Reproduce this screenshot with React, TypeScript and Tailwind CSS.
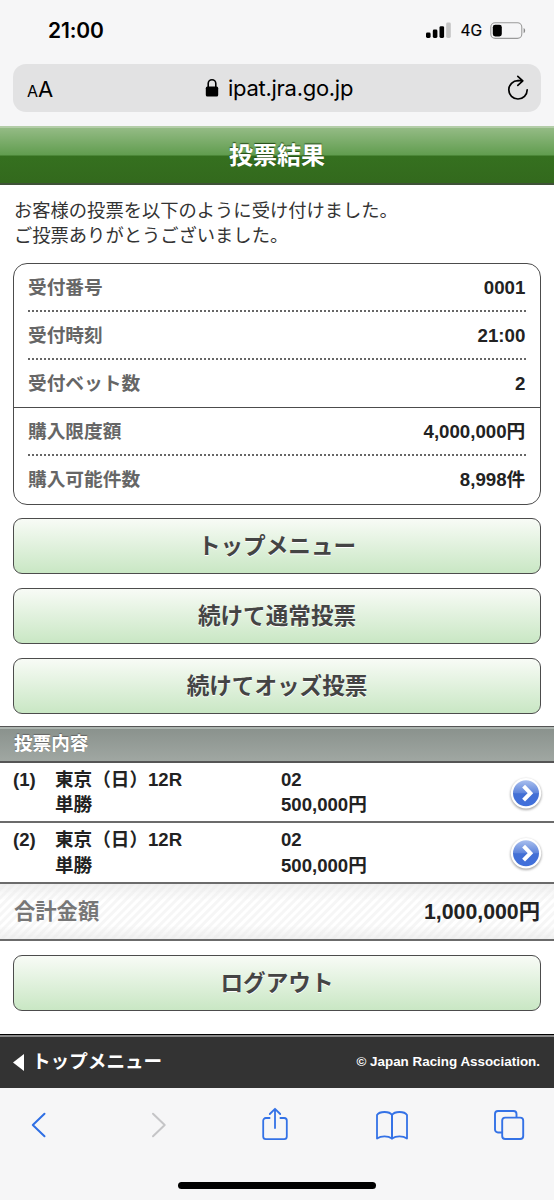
import React from 'react';

interface ReceiptRow {
  label: string;
  value: string;
  divider: 'dotted' | 'solid' | 'none';
}

interface Bet {
  no: number;
  race: string;
  type: string;
  horse: string;
  amount: string;
}

const receiptRows: ReceiptRow[] = [
  { label: '受付番号', value: '0001', divider: 'dotted' },
  { label: '受付時刻', value: '21:00', divider: 'dotted' },
  { label: '受付ベット数', value: '2', divider: 'solid' },
  { label: '購入限度額', value: '4,000,000円', divider: 'dotted' },
  { label: '購入可能件数', value: '8,998件', divider: 'none' },
];

const bets: Bet[] = [
  { no: 1, race: '東京（日）12R', type: '単勝', horse: '02', amount: '500,000円' },
  { no: 2, race: '東京（日）12R', type: '単勝', horse: '02', amount: '500,000円' },
];

const StatusBar: React.FC = () => (
  <div className="flex h-16 items-center justify-between pl-12 pr-[28px] pb-[3px] font-[Inter,sans-serif]">
    <span className="text-[21px] font-semibold leading-none tracking-[-0.1px] text-black">21:00</span>
    <div className="flex items-center">
      <svg className="mr-[8px]" width="26" height="17" viewBox="0 0 26 17">
        <rect x="0" y="10.5" width="4.6" height="5.5" rx="1.4" />
        <rect x="6.8" y="7.5" width="4.6" height="8.5" rx="1.4" />
        <rect x="13.5" y="4.2" width="4.6" height="11.8" rx="1.4" />
        <rect x="20.2" y="0.5" width="4.6" height="15.5" rx="1.4" fill="#c4c4c4" />
      </svg>
      <span className="text-[15.5px] leading-none text-black [-webkit-text-stroke:0.2px_#000]">4G</span>
      <svg className="ml-[8px]" width="36" height="18" viewBox="0 0 36 18">
        <rect x="0.8" y="0.8" width="31" height="15.6" rx="4.4" fill="none" stroke="#9a9a9a" strokeWidth="1.1" />
        <rect x="2.8" y="2.8" width="9" height="11.6" rx="2.4" />
        <path d="M33.6 6c2 .9 2 4.3 0 5.2z" fill="#8a8a8a" />
      </svg>
    </div>
  </div>
);

const AddressBar: React.FC = () => (
  <div className="mx-[13px] flex h-12 items-center rounded-[13px] bg-[#e2e2e3] pl-[14px] pr-[11px] font-[Inter,sans-serif] text-black">
    <div className="flex w-[178px] items-baseline pt-px leading-none">
      <span className="text-[16px]">A</span>
      <span className="text-[22px]">A</span>
    </div>
    <div className="flex grow items-center">
      <svg className="mr-[9px]" width="14" height="20" viewBox="0 0 14 20">
        <rect x="0.8" y="8.6" width="12.4" height="10" rx="1.6" />
        <path d="M3.2 9V5.5a3.8 3.8 0 0 1 7.6 0V9" fill="none" stroke="#000" strokeWidth="1.6" />
      </svg>
      <span className="text-[22px] leading-none tracking-[-0.28px]">ipat.jra.go.jp</span>
    </div>
    <svg width="24" height="26" viewBox="0 0 24 26" fill="none" stroke="#000" strokeWidth="1.7" strokeLinecap="round" strokeLinejoin="round">
      <path d="M12 5.6a9.2 9.2 0 1 0 9.2 9.2" />
      <path d="M12 5.6h4.6M11.8 1.4l5 4.4-5 4.6" />
    </svg>
  </div>
);

const GreenButton: React.FC<{ label: string }> = ({ label }) => (
  <button className="mx-[13px] flex h-14 items-center justify-center rounded-[9px] border-[1.5px] border-[#4c4c4c] bg-linear-to-b from-[#f8fbf6] to-[#c9e7c4] pt-[2px] text-[22.6px] font-bold leading-none text-[#444] [text-shadow:0_1px_0_#fff]">
    {label}
  </button>
);

const ArrowBadge: React.FC = () => (
  <svg width="36" height="36" viewBox="0 0 36 36">
    <defs>
      <linearGradient id="badge" x1="0" y1="0" x2="0" y2="1">
        <stop offset="0" stopColor="#a9bfee" />
        <stop offset="0.48" stopColor="#6187dc" />
        <stop offset="0.52" stopColor="#4470d4" />
        <stop offset="1" stopColor="#3f6fdc" />
      </linearGradient>
      <filter id="soft" x="-20%" y="-20%" width="140%" height="140%">
        <feGaussianBlur stdDeviation="0.9" />
      </filter>
    </defs>
    <circle cx="18" cy="18.4" r="15.6" fill="#aaa" filter="url(#soft)" />
    <circle cx="18" cy="17.2" r="15.2" fill="#fff" />
    <circle cx="18" cy="17.2" r="13" fill="url(#badge)" />
    <path d="M15.6 10.2l6.8 7-6.8 7" fill="none" stroke="#fff" strokeWidth="4" />
  </svg>
);

const BetRow: React.FC<{ bet: Bet }> = ({ bet }) => (
  <div className="flex h-[60.5px] border-b-2 border-[#6b6b6b] pl-[13px] pr-[10px] pt-[4px] text-[18.6px] font-bold leading-[25.5px] text-[#222]">
    <div className="w-[42px]">({bet.no})</div>
    <div className="w-[226px]">
      <p>{bet.race}</p>
      <p>{bet.type}</p>
    </div>
    <div className="grow">
      <p>{bet.horse}</p>
      <p>{bet.amount}</p>
    </div>
    <div className="pt-[9px]">
      <ArrowBadge />
    </div>
  </div>
);

const Toolbar: React.FC = () => (
  <div className="flex h-[112px] flex-col items-center justify-between bg-[#f6f6f7] pb-[11px] pt-[17px]">
    <div className="flex w-full items-center pl-[30px]">
      <svg width="18" height="40" viewBox="0 0 18 40" fill="none" stroke="#2f6fe4" strokeWidth="2" strokeLinecap="round" strokeLinejoin="round">
        <path d="M14.5 8.8L2.8 20l11.7 11.2" />
      </svg>
      <svg className="ml-[102px]" width="18" height="40" viewBox="0 0 18 40" fill="none" stroke="#c5c5c7" strokeWidth="2" strokeLinecap="round" strokeLinejoin="round">
        <path d="M3 8.8L14.7 20 3 31.2" />
      </svg>
      <svg className="ml-[92px]" width="30" height="40" viewBox="0 0 30 40" fill="none" stroke="#3472e6" strokeWidth="1.8" strokeLinecap="round" strokeLinejoin="round">
        <path d="M9.6 13H5.800a2.600 2.600 0 0 0-2.600 2.600v16A2.600 2.600 0 0 0 5.800 34.200h18.400a2.600 2.600 0 0 0 2.600-2.600v-16a2.600 2.600 0 0 0-2.600-2.600h-3.800" />
        <path d="M15 23V4M9.8 9L15 3.8 20.2 9" />
      </svg>
      <svg className="ml-[85px]" width="34" height="40" viewBox="0 0 34 40" fill="none" stroke="#3472e6" strokeWidth="1.8" strokeLinejoin="round">
        <path d="M17 10v23.5c-4-2.8-11-2.8-15 0V10c2.5-4 12.5-4 15 0z" />
        <path d="M17 10v23.5c4-2.8 11-2.8 15 0V10c-2.5-4-12.5-4-15 0z" />
      </svg>
      <svg className="ml-[83px]" width="34" height="40" viewBox="0 0 34 40" fill="none" stroke="#3472e6" strokeWidth="1.9" strokeLinejoin="round">
        <rect x="10.2" y="12.6" width="21" height="21.4" rx="3" />
        <path d="M10.2 27.500H6a3 3 0 0 1-3-3V9a3 3 0 0 1 3-3h15.500a3 3 0 0 1 3 3v3.600" />
      </svg>
    </div>
    <div className="h-[7px] w-[198px] rounded-full bg-black" />
  </div>
);

const App: React.FC = () => {
  return (
    <div className="flex h-[1200px] w-[554px] flex-col overflow-hidden bg-white font-['Liberation_Sans','Noto_Sans_CJK_JP',sans-serif]">
      <div className="h-[126px] bg-[#f6f6f7]">
        <StatusBar />
        <AddressBar />
      </div>

      <header className="flex h-[59px] items-center justify-center border-b-2 border-t-2 border-b-[#3f5138] border-t-[#b3cda8] bg-[linear-gradient(#94bb85_0%,#619d4f_49%,#35701f_51%,#33691d_100%)] pt-px text-[24px] font-bold leading-none text-white [text-shadow:0_-1px_1px_#234b14]">
        投票結果
      </header>

      <div className="h-[78px] px-[14px] pt-[13px] text-[18.3px] leading-[25.5px] text-[#333]">
        <p>お客様の投票を以下のように受け付けました。</p>
        <p>ご投票ありがとうございました。</p>
      </div>

      <dl className="mx-[13px] mb-[13px] flex h-[242px] flex-col rounded-[14px] border-[1.5px] border-[#4c4c4c] text-[18.7px] font-bold leading-none">
        {receiptRows.map((row) => (
          <div key={row.label} className={row.divider === 'solid' ? 'h-[48.2px] border-b-[1.5px] border-[#4c4c4c] px-[14px]' : 'h-[48.2px] px-[14px]'}>
            <div className={row.divider === 'dotted' ? 'flex h-full items-center justify-between border-b-2 border-dotted border-[#666] pt-[2px]' : 'flex h-full items-center justify-between pt-px'}>
              <dt className="text-[#666]">{row.label}</dt>
              <dd className="mr-[0.7px] text-[#222]">{row.value}</dd>
            </div>
          </div>
        ))}
      </dl>

      <div className="flex h-[208px] flex-col gap-[14px]">
        <GreenButton label="トップメニュー" />
        <GreenButton label="続けて通常投票" />
        <GreenButton label="続けてオッズ投票" />
      </div>

      <h2 className="flex h-[37px] items-center border-b-2 border-t border-b-[#555] border-t-[#555] bg-linear-to-b from-[#89918c] to-[#a0a7a2] px-[14px] pt-[2px] text-[18.6px] font-bold leading-none text-white shadow-[inset_0_2px_0_#adb5b0] [text-shadow:0_-1px_1px_#666]">
        投票内容
      </h2>
      {bets.map((bet) => (
        <BetRow key={bet.no} bet={bet} />
      ))}

      <div className="flex h-[57.5px] items-center justify-between border-b-2 border-[#6b6b6b] bg-[linear-gradient(#e8e8e8aa,#ffffff00_30%,#ffffff00_75%,#e8e8e8aa),repeating-linear-gradient(135deg,#fff_0_2px,#f6f6f6_3px_5px,#fff_6px)] px-[14px] pt-[3px] text-[21.3px] font-bold leading-none">
        <span className="text-[#777]">合計金額</span>
        <span className="text-[#222]">1,000,000円</span>
      </div>

      <div className="flex h-[93px] flex-col pt-[14px]">
        <GreenButton label="ログアウト" />
      </div>

      <footer className="flex h-[54px] items-center justify-between border-t border-black bg-[#333] pl-[13px] pr-[14px] font-bold leading-none text-white shadow-[inset_0_2px_0_#888]">
        <div className="flex items-center gap-[8px] pt-px text-[18.6px]">
          <svg width="11" height="17" viewBox="0 0 11 17" fill="#fff">
            <path d="M0 8.5L11 0v17z" />
          </svg>
          トップメニュー
        </div>
        <small className="text-[13.4px]">© Japan Racing Association.</small>
      </footer>

      <Toolbar />
    </div>
  );
};

export default App;
